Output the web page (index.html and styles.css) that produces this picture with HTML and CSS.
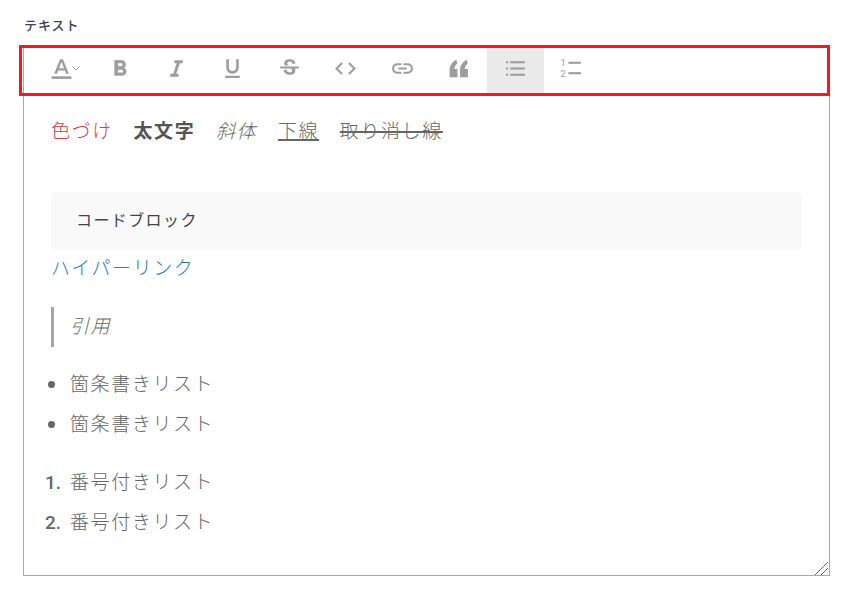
FILE: index.html
```html
<!DOCTYPE html>
<html lang="ja">
<head>
<meta charset="utf-8">
<title>テキスト</title>
<link rel="stylesheet" href="styles.css">
</head>
<body>
<div class="field">
  <div class="label">テキスト</div>
  <div class="editor-wrap">
    <div class="editor">
      <div class="toolbar">
        <button class="tool" type="button">
          <svg class="icon icon-color" viewBox="0 0 24 24"><path d="M10.600 3L5 17h2.700l1.100-3h6.400l1.100 3H19L13.400 3h-2.800zm-1 8.800L12 5.700l2.400 6.100H9.600z"/><rect x="2.500" y="19.500" width="19" height="2.500"/></svg>
          <svg class="chevron" viewBox="0 0 8 5"><path d="M.7.7L4 4l3.300-3.300" fill="none" stroke="#999" stroke-width="1"/></svg>
        </button>
        <button class="tool" type="button"><svg class="icon icon-bold" viewBox="0 0 24 24"><path d="M15.600 10.790c.97-.67 1.650-1.770 1.650-2.790 0-2.260-1.750-4-4-4H7v14h7.040c2.090 0 3.710-1.700 3.710-3.790 0-1.520-.86-2.820-2.150-3.420zM10 6.500h3c.83 0 1.500.67 1.500 1.500s-.67 1.500-1.500 1.500h-3v-3zm3.500 9H10v-3h3.500c.83 0 1.500.67 1.500 1.500s-.67 1.500-1.500 1.500z"/></svg></button>
        <button class="tool" type="button"><svg class="icon" viewBox="0 0 24 24"><path d="M10 4v3h2.210l-3.420 10H6v3h8v-3h-2.210l3.420-10H18V4z"/></svg></button>
        <button class="tool" type="button"><svg class="icon" viewBox="0 0 24 24"><path d="M12 17c3.310 0 6-2.690 6-6V3h-2.500v8c0 1.930-1.570 3.500-3.500 3.500S8.500 12.930 8.500 11V3H6v8c0 3.310 2.690 6 6 6zm-7 2v2h14v-2H5z"/></svg></button>
        <button class="tool" type="button"><svg class="icon" viewBox="0 0 24 24"><path d="M7.240 8.750c-.26-.48-.39-1.030-.39-1.670 0-.61.13-1.160.4-1.670.26-.5.63-.93 1.110-1.290.48-.35 1.050-.63 1.700-.83.66-.19 1.390-.29 2.180-.29.81 0 1.540.11 2.210.34.66.22 1.230.54 1.690.94.47.4.83.88 1.080 1.430.25.55.38 1.150.38 1.810h-3.010c0-.31-.05-.59-.15-.85-.09-.27-.24-.49-.44-.68-.2-.19-.45-.33-.75-.44-.3-.1-.66-.16-1.060-.16-.39 0-.74.04-1.030.13-.29.09-.53.21-.72.36-.19.16-.34.34-.44.55-.1.21-.15.43-.15.66 0 .48.25.88.74 1.210.38.25.77.48 1.410.7H7.390c-.05-.08-.11-.17-.15-.25zM21 12v-2H3v2h9.620c.18.07.4.14.55.2.37.17.66.34.87.51.21.17.35.36.43.57.07.2.11.43.11.69 0 .23-.05.45-.14.66-.09.2-.23.38-.42.53-.19.15-.42.26-.71.35-.29.08-.63.13-1.010.13-.43 0-.83-.04-1.180-.13s-.66-.23-.91-.42c-.25-.19-.45-.44-.59-.75-.14-.31-.25-.76-.25-1.210H6.400c0 .55.08 1.130.24 1.580.16.45.37.85.65 1.210.28.35.6.66.98.92.37.26.78.48 1.220.65.44.17.9.3 1.380.39.48.08.96.13 1.440.13.8 0 1.530-.09 2.180-.28s1.210-.45 1.670-.79c.46-.34.82-.77 1.070-1.270s.38-1.070.38-1.710c0-.6-.1-1.140-.31-1.610-.05-.11-.11-.23-.17-.33H21z"/></svg></button>
        <button class="tool" type="button"><svg class="icon" viewBox="0 0 24 24"><path d="M9.400 16.600L4.800 12l4.600-4.600L8 6l-6 6 6 6 1.400-1.400zm5.200 0l4.600-4.600-4.600-4.600L16 6l6 6-6 6-1.400-1.400z"/></svg></button>
        <button class="tool" type="button"><svg class="icon" viewBox="0 0 24 24"><path d="M3.900 12c0-1.710 1.390-3.100 3.100-3.100h4V7H7c-2.760 0-5 2.240-5 5s2.240 5 5 5h4v-1.900H7c-1.710 0-3.100-1.390-3.100-3.100zM8 13h8v-2H8v2zm9-6h-4v1.900h4c1.710 0 3.100 1.390 3.100 3.100s-1.390 3.100-3.100 3.100h-4V17h4c2.760 0 5-2.240 5-5s-2.240-5-5-5z"/></svg></button>
        <button class="tool" type="button"><svg class="icon" viewBox="0 0 24 24"><path d="M10 3.500C6 5.500 3.500 9 3.500 13.500V20.500H11V12.500H8C8.200 10.500 9 8.800 10.800 7.300L10 3.500ZM20 3.500C16 5.500 13.500 9 13.500 13.500V20.500H21V12.500H18C18.200 10.500 19 8.800 20.800 7.300L20 3.500Z"/></svg></button>
        <button class="tool tool-active" type="button"><svg class="icon" viewBox="0 0 24 24"><rect x="3" y="5" width="2" height="2"/><rect x="3" y="11" width="2" height="2"/><rect x="3" y="17" width="2" height="2"/><rect x="7" y="5" width="14" height="2"/><rect x="7" y="11" width="14" height="2"/><rect x="7" y="17" width="14" height="2"/></svg></button>
        <button class="tool" type="button"><svg class="icon" viewBox="0 0 24 24"><text class="icon-num" x="1.500" y="9.500">1</text><text class="icon-num" x="1.500" y="20">2</text><rect x="9" y="5.500" width="12" height="2"/><rect x="9" y="15.500" width="12" height="2"/></svg></button>
      </div>
      <div class="content">
        <p class="inline-row"><span class="red">色づけ</span><strong>太文字</strong><em>斜体</em><u>下線</u><s>取り消し線</s></p>
        <pre class="code">コードブロック</pre>
        <p class="link-row"><a href="#">ハイパーリンク</a></p>
        <blockquote class="quote">引用</blockquote>
        <ul class="list bullets">
          <li>箇条書きリスト</li>
          <li>箇条書きリスト</li>
        </ul>
        <ol class="list numbers">
          <li>番号付きリスト</li>
          <li>番号付きリスト</li>
        </ol>
      </div>
    </div>
    <div class="highlight"></div>
    <svg class="grip" viewBox="0 0 14 14"><path d="M0 13h1v1H0zM1 12h1v1H1zM2 11h1v1H2zM3 10h1v1H3zM4 9h1v1H4zM5 8h1v1H5zM6 7h1v1H6zM7 6h1v1H7zM8 5h1v1H8zM9 4h1v1H9zM10 3h1v1H10zM11 2h1v1H11zM12 1h1v1H12zM6 13h1v1H6zM7 12h1v1H7zM8 11h1v1H8zM9 10h1v1H9zM10 9h1v1H10zM11 8h1v1H11zM12 7h1v1H12z" fill="#666"/></svg>
  </div>
</div>
</body>
</html>
```

FILE: styles.css
```css
* {
  box-sizing: border-box;
}

html,
body {
  margin: 0;
  background: #fff;
}

body {
  padding: 17px 0 0 23px;
  font-family: Roboto, "Noto Sans CJK JP", sans-serif;
  color: #666;
  overflow: hidden;
}

.label {
  font-size: 13px;
  line-height: 17px;
  font-weight: 500;
  letter-spacing: 1px;
  color: #3c4258;
  padding-left: 1px;
  margin-bottom: 13px;
}

.editor-wrap {
  position: relative;
  width: 807px;
}

.editor {
  width: 807px;
  height: 529px;
  border: 1px solid #aaa;
  overflow: hidden;
}

.content {
  padding: 25px 27px 0;
}

.toolbar {
  display: flex;
  height: 45px;
  padding-left: 11px;
}

.tool {
  width: 56.500px;
  height: 45px;
  padding: 8px 0 0;
  border: 0;
  background: none;
  display: flex;
  justify-content: center;
  align-items: flex-start;
  flex: none;
}

.tool-active {
  background: #eaeaea;
}

.icon {
  display: block;
  width: 25px;
  height: 25px;
  fill: #9d9d9d;
}

.icon-color {
  margin-left: 3px;
}

.icon-bold {
  width: 26px;
  height: 26px;
  margin-left: 1px;
  stroke: #9d9d9d;
  stroke-width: 0.400px;
}

.chevron {
  width: 8px;
  height: 5px;
  margin: 10px 0 0 -2px;
}

.icon-num {
  font-size: 9px;
  font-family: Roboto, sans-serif;
}

.content p,
.content pre,
.content blockquote,
.content ul,
.content ol {
  margin: 0;
}

.inline-row,
.link-row,
.quote,
.list li {
  font-size: 19px;
  line-height: 28px;
  font-weight: 300;
  letter-spacing: 1.600px;
}

.inline-row {
  display: flex;
  gap: 20.700px;
}

.inline-row u,
.inline-row s {
  text-decoration-thickness: 2px;
  text-decoration-color: #666;
}

.inline-row strong {
  font-weight: 700;
  color: #555;
}

.red {
  color: #e03a3a;
}

.content .code {
  margin-top: 46px;
  height: 57px;
  padding: 0 25px;
  background: #f9f9f9;
  border-radius: 4px;
  font-family: Roboto, "Noto Sans CJK JP", sans-serif;
  font-size: 16px;
  line-height: 57px;
  font-weight: 400;
  letter-spacing: 1.400px;
  color: #444;
}

.content .link-row {
  margin-top: 6px;
}

.link-row a {
  color: #2b7ab5;
  text-decoration: none;
}

.content .quote {
  margin-top: 24px;
  height: 40px;
  line-height: 40px;
  border-left: 3px solid #a5a5a5;
  padding-left: 16px;
  font-style: italic;
}

.list {
  padding: 0 0 0 19px;
}

.list li + li {
  margin-top: 12px;
}

.content .bullets {
  margin-top: 24px;
  list-style: none;
}

.bullets li {
  position: relative;
}

.bullets li::before {
  content: "";
  position: absolute;
  left: -22px;
  top: 10px;
  width: 7px;
  height: 7px;
  border-radius: 50%;
  background: #666;
}

.content .numbers {
  margin-top: 30px;
  list-style: none;
  counter-reset: item;
}

.numbers li {
  position: relative;
  counter-increment: item;
}

.numbers li::before {
  content: counter(item) ".";
  position: absolute;
  left: -25px;
  top: 0;
  font-weight: 500;
  letter-spacing: 0;
  color: #666;
}

.highlight {
  position: absolute;
  left: -4px;
  top: -2px;
  width: 811px;
  height: 51px;
  border: 3px solid #ed1c24;
  pointer-events: none;
}

.grip {
  position: absolute;
  right: 1px;
  bottom: 1px;
  width: 14px;
  height: 14px;
}
```
